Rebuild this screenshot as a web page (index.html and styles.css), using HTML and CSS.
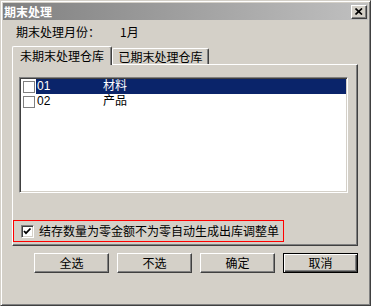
FILE: index.html
```html
<!DOCTYPE html>
<html lang="zh-CN">
<head>
    <meta charset="UTF-8">
    <title>期末处理</title>
    <link rel="stylesheet" href="styles.css">
</head>
<body>
<div class="dlg">
    <!--标题栏-->
    <div class="title">
        <span class="title-text">期末处理</span>
        <span class="close-btn">
            <svg width="8" height="7" viewBox="0 0 8 7"><path d="M0.5 0.5L7 6.5M7 0.5L0.5 6.5" stroke="#000" stroke-width="1.7" fill="none"/></svg>
        </span>
    </div>
    <div class="month-row"><span class="month-label">期末处理月份：</span><span>1月</span></div>
    <!--选项卡-->
    <div class="tabs">
        <div class="tab active">未期末处理仓库</div>
        <div class="tab">已期末处理仓库</div>
    </div>
    <div class="panel">
        <div class="listbox">
            <div class="row selected"><span class="cb"></span><span class="item"><span class="code">01</span>材料</span></div>
            <div class="row"><span class="cb"></span><span class="item"><span class="code">02</span>产品</span></div>
        </div>
        <div class="auto-adjust">
            <span class="cb-3d">
                <svg width="11" height="11" viewBox="0 0 11 11"><path d="M2 5L4 7.2L8.5 2.5" stroke="#000" stroke-width="1.8" fill="none"/></svg>
            </span>
            <span>结存数量为零金额不为零自动生成出库调整单</span>
        </div>
    </div>
    <!--按钮-->
    <div class="buttons">
        <div class="btn">全选</div>
        <div class="btn">不选</div>
        <div class="btn">确定</div>
        <div class="btn default">取消</div>
    </div>
</div>
</body>
</html>
```

FILE: styles.css
```css
* {
    margin: 0;
    padding: 0;
    box-sizing: border-box;
}

body {
    font-family: "Noto Sans CJK SC", "Liberation Sans", sans-serif;
    font-size: 12px;
    color: #000;
    background: #d4d0c8;
}

.dlg {
    width: 371px;
    height: 306px;
    background: #d4d0c8;
    border: 1px solid;
    border-color: #d4d0c8 #404040 #404040 #d4d0c8;
    box-shadow: inset 1px 1px #fff, inset -1px -1px #808080;
    padding: 2px;
    display: flex;
    flex-direction: column;
}

.title {
    height: 17px;
    background: linear-gradient(to right, #808080, #c0c0c0);
    display: flex;
    align-items: center;
    justify-content: space-between;
    padding: 0 1px 0 1px;
}

.title-text {
    color: #fff;
    font-weight: bold;
    font-size: 12px;
    line-height: 17px;
}

.close-btn {
    width: 16px;
    height: 14px;
    background: #d4d0c8;
    border: 1px solid;
    border-color: #fff #404040 #404040 #fff;
    box-shadow: inset -1px -1px #808080;
    display: flex;
    align-items: center;
    justify-content: center;
}

.month-row {
    margin-top: 4px;
    padding-left: 13px;
    line-height: 16px;
    display: flex;
}

.month-label {
    width: 104px;
}

.tabs {
    margin-top: 6px;
    padding-left: 9px;
    height: 18px;
    display: flex;
    align-items: flex-end;
}

.tab {
    height: 16px;
    width: 97px;
    line-height: 15px;
    text-align: center;
    border: 1px solid;
    border-bottom: none;
    border-color: #fff #404040 #404040 #fff;
    border-radius: 2px 2px 0 0;
    box-shadow: inset -1px 0 #808080;
}

.tab.active {
    height: 19px;
    width: 100px;
    line-height: 17px;
    margin-bottom: -1px;
    background: #d4d0c8;
    position: relative;
    z-index: 1;
}

.panel {
    margin-left: 9px;
    width: 346px;
    height: 182px;
    border: 1px solid;
    border-color: #fff #404040 #404040 #fff;
    box-shadow: inset -1px -1px #808080;
}

.listbox {
    margin: 12px 0 0 6px;
    width: 329px;
    height: 116px;
    background: #fff;
    border: 1px solid;
    border-color: #808080 #fff #fff #808080;
    box-shadow: inset 1px 1px #404040, inset -1px -1px #d4d0c8;
    padding: 1px;
    font-family: "Liberation Sans", "Noto Sans CJK SC", sans-serif;
}

.row {
    height: 15px;
    display: flex;
    align-items: center;
    padding-left: 2px;
}

.cb {
    width: 12px;
    height: 12px;
    border: 1px solid #808080;
    background: #fff;
}

.item {
    margin-left: 1px;
    flex: 1;
    height: 15px;
    line-height: 15px;
    display: flex;
}

.row.selected .item {
    background: #0a246a;
    color: #fff;
}

.code {
    width: 67px;
    padding-left: 1px;
}

.auto-adjust {
    margin-top: 27px;
    width: 271px;
    height: 22px;
    border: 1px solid #f00;
    display: flex;
    align-items: center;
    padding-left: 7px;
    line-height: 16px;
}

.cb-3d {
    width: 13px;
    height: 13px;
    margin-right: 5px;
    background: #fff;
    border: 1px solid;
    border-color: #808080 #fff #fff #808080;
    box-shadow: inset 1px 1px #404040, inset -1px -1px #d4d0c8;
    display: flex;
    align-items: center;
    justify-content: center;
}

.buttons {
    margin-top: 7px;
    padding-right: 10px;
    display: flex;
    justify-content: flex-end;
    gap: 8px;
}

.btn {
    width: 75px;
    height: 20px;
    line-height: 18px;
    text-align: center;
    border: 1px solid;
    border-color: #fff #404040 #404040 #fff;
    box-shadow: inset -1px -1px #808080;
}

.btn.default {
    border-color: #000;
    box-shadow: inset 1px 1px #fff, inset -1px -1px #404040, inset -2px -2px #808080;
}
```
